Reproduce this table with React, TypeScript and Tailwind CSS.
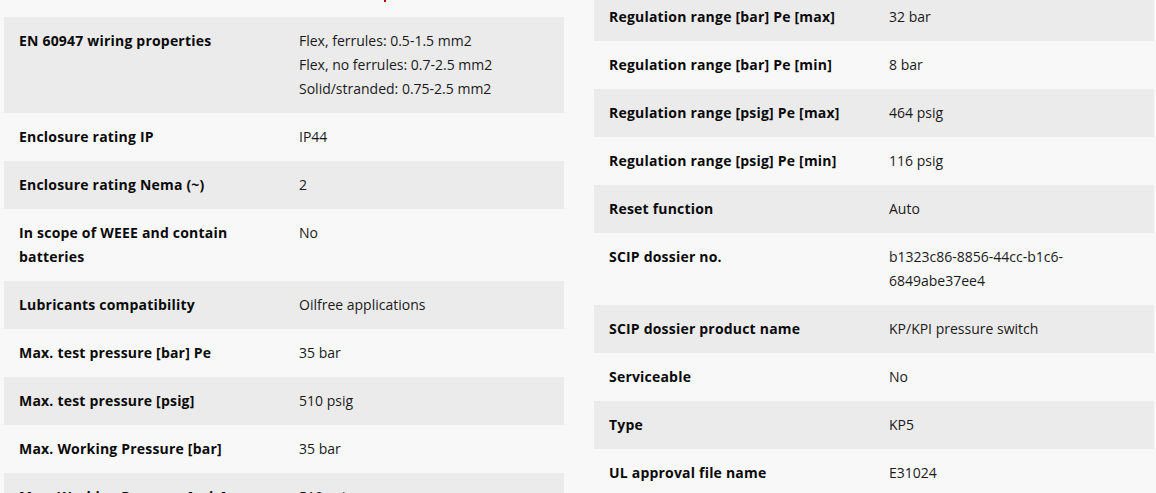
import React from "react";

type Row = { label: string; value: string[] };

const left: Row[] = [
  { label: "EN 60947 wiring properties", value: ["Flex, ferrules: 0.5-1.5 mm2", "Flex, no ferrules: 0.7-2.5 mm2", "Solid/stranded: 0.75-2.5 mm2"] },
  { label: "Enclosure rating IP", value: ["IP44"] },
  { label: "Enclosure rating Nema (~)", value: ["2"] },
  { label: "In scope of WEEE and contain batteries", value: ["No"] },
  { label: "Lubricants compatibility", value: ["Oilfree applications"] },
  { label: "Max. test pressure [bar] Pe", value: ["35 bar"] },
  { label: "Max. test pressure [psig]", value: ["510 psig"] },
  { label: "Max. Working Pressure [bar]", value: ["35 bar"] },
  { label: "Max. Working Pressure [psig]", value: ["510 psig"] },
];

const right: Row[] = [
  { label: "Regulation range [bar] Pe [max]", value: ["32 bar"] },
  { label: "Regulation range [bar] Pe [min]", value: ["8 bar"] },
  { label: "Regulation range [psig] Pe [max]", value: ["464 psig"] },
  { label: "Regulation range [psig] Pe [min]", value: ["116 psig"] },
  { label: "Reset function", value: ["Auto"] },
  { label: "SCIP dossier no.", value: ["b1323c86-8856-44cc-b1c6-6849abe37ee4"] },
  { label: "SCIP dossier product name", value: ["KP/KPI pressure switch"] },
  { label: "Serviceable", value: ["No"] },
  { label: "Type", value: ["KP5"] },
  { label: "UL approval file name", value: ["E31024"] },
];

function Table({ rows }: { rows: Row[] }) {
  return (
    <div className="flex flex-col w-[560px]">
      {rows.map((r, i) => (
        <div key={i} className={`grid grid-cols-[280px_280px] ${i % 2 === 0 ? "bg-[#ebebeb]" : "bg-[#f8f8f8]"}`}>
          <div className="pl-[15px] pr-[30px] py-[12px] font-bold text-[#0a0a0a] tracking-[0.2px]">{r.label}</div>
          <div className="pl-[15px] pr-[60px] py-[12px] text-[#1a1a1a] break-words">
            {r.value.map((v, j) => (
              <div key={j}>{v}</div>
            ))}
          </div>
        </div>
      ))}
    </div>
  );
}

export default function App() {
  return (
    <div
      className="w-[1156px] h-[493px] overflow-hidden bg-[#f8f8f8] text-[14px] leading-[24px] relative"
      style={{ fontFamily: '"Open Sans", "Noto Sans", sans-serif' }}
    >
      <div className="absolute left-[384px] top-0 w-[2px] h-[2px] bg-[#b00]" />
      <div className="flex gap-[30px] pl-[4px]">
        <div className="mt-[17px]">
          <Table rows={left} />
        </div>
        <div className="mt-[-7px]">
          <Table rows={right} />
        </div>
      </div>
    </div>
  );
}
